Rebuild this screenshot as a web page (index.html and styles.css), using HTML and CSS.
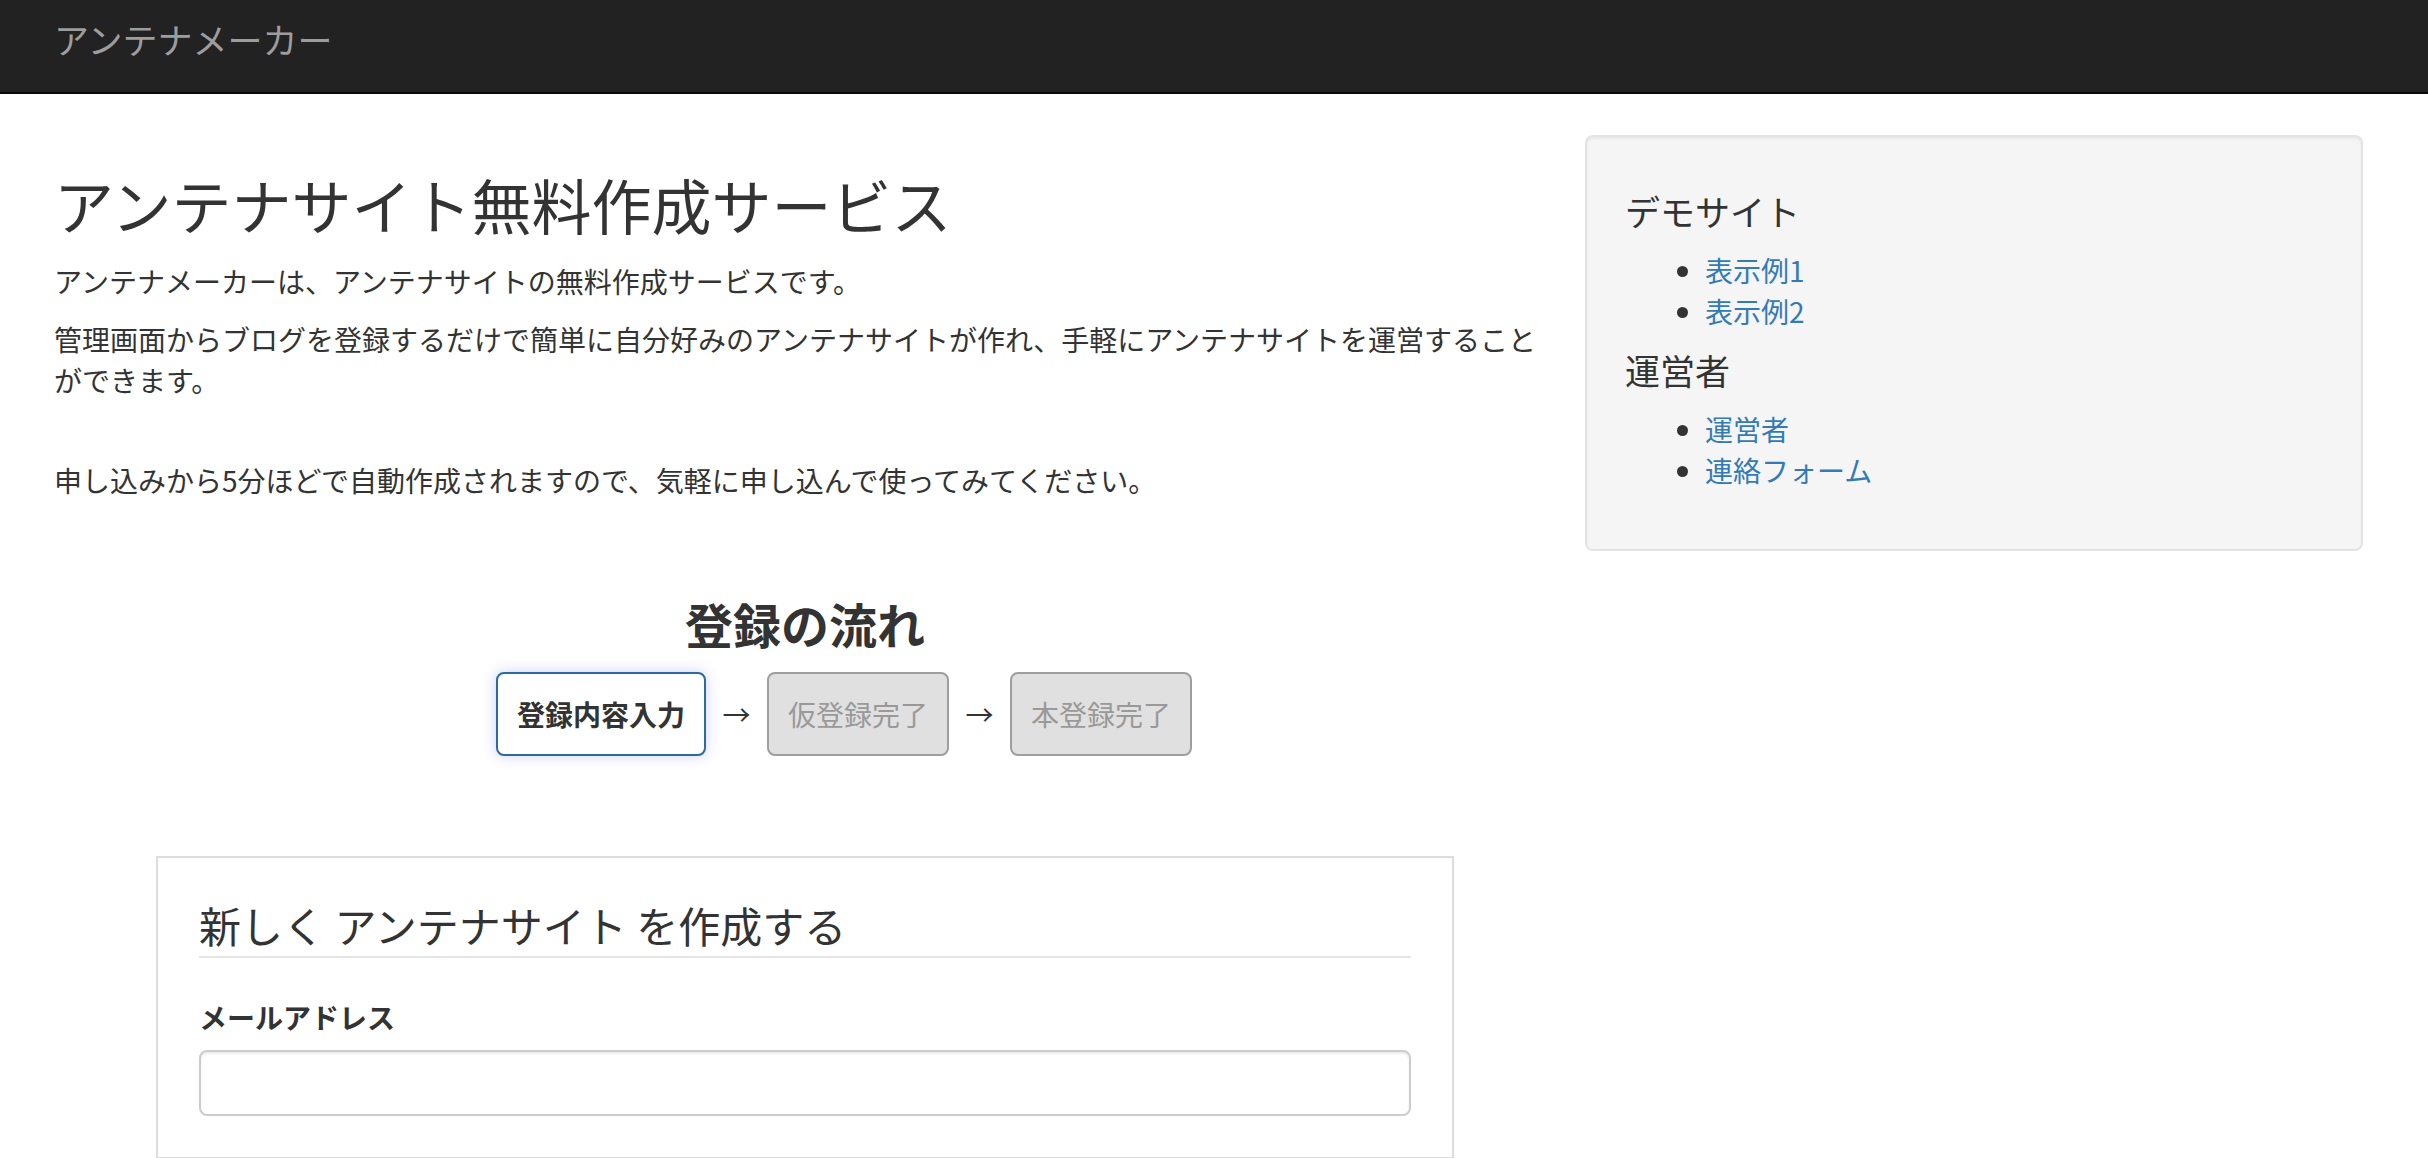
FILE: index.html
```html
<!DOCTYPE html>
<html lang="ja">
<head>
    <meta charset="UTF-8">
    <meta name="viewport" content="width=device-width, initial-scale=1.0">
    <title>アンテナメーカー</title>
    <link rel="stylesheet" href="styles.css">
</head>
<body>
    <nav class="navbar">
        <a class="brand" href="#">アンテナメーカー</a>
    </nav>
    <div class="main">
        <div class="content">
            <h1>アンテナサイト無料作成サービス</h1>
            <p>アンテナメーカーは、アンテナサイトの無料作成サービスです。</p>
            <p>管理画面からブログを登録するだけで簡単に自分好みのアンテナサイトが作れ、手軽にアンテナサイトを運営することができます。</p>
            <p class="note">申し込みから5分ほどで自動作成されますので、気軽に申し込んで使ってみてください。</p>

            <h2 class="flow-title">登録の流れ</h2>
            <div class="flow">
                <div class="step active">登録内容入力</div>
                <span class="arrow">→</span>
                <div class="step">仮登録完了</div>
                <span class="arrow">→</span>
                <div class="step">本登録完了</div>
            </div>

            <div class="panel">
                <form>
                    <div class="legend">新しく アンテナサイト を作成する</div>
                    <label for="email">メールアドレス</label>
                    <input type="email" id="email" class="form-input">
                </form>
            </div>
        </div>
        <aside class="sidebar">
            <div class="well">
                <h3>デモサイト</h3>
                <ul>
                    <li><a href="#">表示例1</a></li>
                    <li><a href="#">表示例2</a></li>
                </ul>
                <h3>運営者</h3>
                <ul>
                    <li><a href="#">運営者</a></li>
                    <li><a href="#">連絡フォーム</a></li>
                </ul>
            </div>
        </aside>
    </div>
</body>
</html>
```

FILE: styles.css
```css
body {
    margin: 0;
    font-family: "Noto Sans CJK JP", "Noto Sans", sans-serif;
    font-size: 28px;
    line-height: 41px;
    color: #333;
    background: #fff;
}
a {
    color: #337ab7;
    text-decoration: none;
}
.navbar {
    height: 94px;
    box-sizing: border-box;
    padding: 19px 54px 0;
    background-color: #222;
    border-bottom: 2px solid #080808;
}
.brand {
    font-size: 35px;
    line-height: 40px;
    color: #9d9d9d;
}
.main {
    display: flex;
    gap: 29px;
    padding: 41px 65px 0 54px;
}
.content {
    flex: 1;
    min-width: 0;
}
h1 {
    margin: 36px 0 24px;
    font-size: 60px;
    line-height: 66px;
    font-weight: 400;
}
p {
    margin: 0 0 17px;
}
p.note {
    margin-top: 59px;
}
.flow-title {
    margin: 96px 0 22px;
    text-align: center;
    font-size: 48px;
    line-height: 53px;
    font-weight: 700;
}
.flow {
    display: flex;
    justify-content: center;
    align-items: center;
    padding-left: 78px;
}
.step {
    padding: 20px 19px;
    line-height: 40px;
    border: 2px solid #9e9e9e;
    border-radius: 8px;
    background-color: #e0e0e0;
    color: #999;
}
.step.active {
    background-color: #fff;
    border-color: #2d6aa0;
    color: #333;
    font-weight: 700;
    box-shadow: 0 0 14px rgba(90, 90, 230, 0.28);
}
.arrow {
    width: 61px;
    text-align: center;
    font-size: 28px;
}
.panel {
    margin: 100px 102px 30px;
    padding: 38px 41px 41px;
    border: 2px solid #ddd;
}
.legend {
    font-size: 42px;
    line-height: 58px;
    padding-bottom: 2px;
    border-bottom: 2px solid #e5e5e5;
    margin-bottom: 39px;
}
label {
    display: block;
    font-weight: 700;
    margin-bottom: 12px;
}
.form-input {
    display: block;
    width: 100%;
    height: 66px;
    box-sizing: border-box;
    border: 2px solid #ccc;
    border-radius: 8px;
    box-shadow: inset 0 2px 2px rgba(0, 0, 0, 0.075);
    font-size: 28px;
    padding: 10px 20px;
}
.sidebar {
    width: 778px;
    flex-shrink: 0;
}
.well {
    padding: 36px 38px 40px;
    background-color: #f5f5f5;
    border: 2px solid #e3e3e3;
    border-radius: 8px;
    box-shadow: inset 0 2px 2px rgba(0, 0, 0, 0.05);
}
.well h3 {
    margin: 18px 0 0;
    font-size: 35px;
    line-height: 40px;
    font-weight: 400;
}
.well ul {
    margin: 19px 0 18px;
    padding-left: 80px;
}
```
